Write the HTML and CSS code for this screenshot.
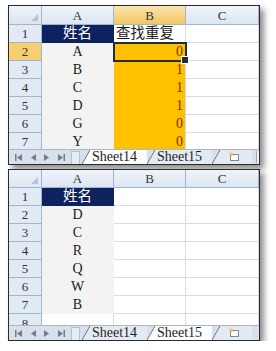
FILE: index.html
```html
<!doctype html>
<html lang="zh-CN">
  <head>
    <meta charset="UTF-8" />
    <meta name="viewport" content="width=device-width, initial-scale=1.0" />
    <title>查找重复</title>
    <link rel="stylesheet" href="styles.css">
  </head>

  <body>
    <div class="page">
      <!-- 上面的表：Sheet14 -->
      <div class="window">
        <div class="sheet">
          <div class="grid">
            <div class="corner"><svg width="7" height="7" viewBox="0 0 7 7"><path d="M7 0V7H0Z" fill="#b9c4d2" /></svg></div>
            <div class="col-head">A</div>
            <div class="col-head col-sel">B</div>
            <div class="col-head">C</div>

            <div class="row-head">1</div>
            <div class="cell title">姓名</div>
            <div class="cell left">查找重复</div>
            <div class="cell"></div>

            <div class="row-head row-sel">2</div>
            <div class="cell name">A</div>
            <div class="cell hit active">0</div>
            <div class="cell"></div>

            <div class="row-head">3</div>
            <div class="cell name">B</div>
            <div class="cell hit">1</div>
            <div class="cell"></div>

            <div class="row-head">4</div>
            <div class="cell name">C</div>
            <div class="cell hit">1</div>
            <div class="cell"></div>

            <div class="row-head">5</div>
            <div class="cell name">D</div>
            <div class="cell hit">1</div>
            <div class="cell"></div>

            <div class="row-head">6</div>
            <div class="cell name">G</div>
            <div class="cell hit">0</div>
            <div class="cell"></div>

            <div class="row-head">7</div>
            <div class="cell name">Y</div>
            <div class="cell hit">0</div>
            <div class="cell"></div>
          </div>
        </div>
        <div class="tabbar">
          <div class="nav">
            <svg width="7" height="7" viewBox="0 0 7 7"><path d="M0 0h1.5v7H0zM7 0v7L2 3.5z" fill="#6f7d91" /></svg>
            <svg width="5" height="7" viewBox="0 0 5 7"><path d="M5 0v7L0 3.5z" fill="#6f7d91" /></svg>
            <svg width="5" height="7" viewBox="0 0 5 7"><path d="M0 0v7l5-3.5z" fill="#6f7d91" /></svg>
            <svg width="7" height="7" viewBox="0 0 7 7"><path d="M5.5 0H7v7H5.5zM0 0v7l5-3.5z" fill="#6f7d91" /></svg>
          </div>
          <div class="split"></div>
          <div class="tab tab-on">Sheet14</div>
          <div class="tab">Sheet15</div>
          <div class="tab tab-add">
            <svg width="12" height="10" viewBox="0 0 12 10"><rect x="2.5" y="2.5" width="8" height="6" fill="#fff" stroke="#7d8a9c" /><path d="M3 0l.7 1.6L5.4 1 4.4 2.4 5.6 3.6 3.9 3.4 3 5 2.4 3.4.6 3.6 1.8 2.4.8 1l1.6.6z" fill="#f2c230" /></svg>
          </div>
          <div class="grip"></div>
        </div>
      </div>

      <!-- 下面的表：Sheet15 -->
      <div class="window">
        <div class="sheet sheet-tall">
          <div class="grid grid-low">
            <div class="corner"><svg width="7" height="7" viewBox="0 0 7 7"><path d="M7 0V7H0Z" fill="#b9c4d2" /></svg></div>
            <div class="col-head">A</div>
            <div class="col-head">B</div>
            <div class="col-head">C</div>

            <div class="row-head">1</div>
            <div class="cell title">姓名</div>
            <div class="cell"></div>
            <div class="cell"></div>

            <div class="row-head">2</div>
            <div class="cell name">D</div>
            <div class="cell"></div>
            <div class="cell"></div>

            <div class="row-head">3</div>
            <div class="cell name">C</div>
            <div class="cell"></div>
            <div class="cell"></div>

            <div class="row-head">4</div>
            <div class="cell name">R</div>
            <div class="cell"></div>
            <div class="cell"></div>

            <div class="row-head">5</div>
            <div class="cell name">Q</div>
            <div class="cell"></div>
            <div class="cell"></div>

            <div class="row-head">6</div>
            <div class="cell name">W</div>
            <div class="cell"></div>
            <div class="cell"></div>

            <div class="row-head">7</div>
            <div class="cell name">B</div>
            <div class="cell"></div>
            <div class="cell"></div>

            <div class="row-head row-cut">8</div>
            <div class="cell"></div>
            <div class="cell"></div>
            <div class="cell"></div>
          </div>
        </div>
        <div class="tabbar">
          <div class="nav">
            <svg width="7" height="7" viewBox="0 0 7 7"><path d="M0 0h1.5v7H0zM7 0v7L2 3.5z" fill="#6f7d91" /></svg>
            <svg width="5" height="7" viewBox="0 0 5 7"><path d="M5 0v7L0 3.5z" fill="#6f7d91" /></svg>
            <svg width="5" height="7" viewBox="0 0 5 7"><path d="M0 0v7l5-3.5z" fill="#6f7d91" /></svg>
            <svg width="7" height="7" viewBox="0 0 7 7"><path d="M5.5 0H7v7H5.5zM0 0v7l5-3.5z" fill="#6f7d91" /></svg>
          </div>
          <div class="split"></div>
          <div class="tab">Sheet14</div>
          <div class="tab tab-on">Sheet15</div>
          <div class="tab tab-add">
            <svg width="12" height="10" viewBox="0 0 12 10"><rect x="2.5" y="2.5" width="8" height="6" fill="#fff" stroke="#7d8a9c" /><path d="M3 0l.7 1.6L5.4 1 4.4 2.4 5.6 3.6 3.9 3.4 3 5 2.4 3.4.6 3.6 1.8 2.4.8 1l1.6.6z" fill="#f2c230" /></svg>
          </div>
        </div>
      </div>
    </div>
  </body>
</html>
```

FILE: styles.css
```css
* {
  box-sizing: border-box;
}

body {
  margin: 0;
  background: #fff;
  font-family: "Liberation Serif", "Noto Sans CJK SC", serif;
  color: #1a1a1a;
}

.page {
  display: flex;
  flex-direction: column;
  gap: 4px;
  padding: 5px 0 0 8px;
}

.window {
  width: 252px;
  border: 1px solid #2b2b2b;
  background: #fff;
  box-shadow: 4px 4px 6px rgba(0, 0, 0, 0.45);
}

.sheet {
  height: 143px;
  overflow: hidden;
}
.sheet-tall {
  height: 155px;
}

.grid {
  display: grid;
  grid-template-columns: 33px 72px 72px 73px;
  grid-template-rows: 19px;
  grid-auto-rows: 18px;
  font-size: 14px;
}
.grid-low {
  grid-template-rows: 18px;
}

.grid > div {
  display: flex;
  align-items: center;
  justify-content: center;
  border-right: 1px solid #d5dce6;
  border-bottom: 1px solid #d5dce6;
  line-height: 1;
}

.corner {
  background: linear-gradient(#eef3f9, #dce5f1);
  border-color: #9eb6ce !important;
}
.grid > .corner {
  align-items: flex-end;
  justify-content: flex-end;
  padding: 0 3px 3px 0;
}

.col-head {
  background: linear-gradient(#f1f5fa, #dbe5f2);
  border-color: #9eb6ce !important;
  color: #333;
  font-size: 13px;
}
.col-sel {
  background: linear-gradient(#fbe4ae, #f3c661);
}

.row-head {
  background: #e2eaf5;
  border-color: #9eb6ce !important;
  color: #333;
  font-size: 13px;
}
.row-sel {
  background: #f6cf70;
}
.grid > .row-cut {
  align-items: flex-start;
  padding-top: 3px;
}

.grid > .left {
  justify-content: flex-start;
  padding-left: 2px;
  font-size: 14.5px;
}

.grid > .title {
  background: #0e235d;
  border-color: #0e235d;
  color: #fff;
  font-size: 14.5px;
}

.grid > .name {
  background: #f3f3f3;
  border-color: #f3f3f3;
}

.grid > .hit {
  justify-content: flex-end;
  padding-right: 2px;
  background: #ffc000;
  border-bottom-color: #ffc000;
  color: #7a3000;
}

.grid > .active {
  position: relative;
  z-index: 1;
  outline: 2px solid #222b36;
  outline-offset: -1px;
}
.active::after {
  content: "";
  position: absolute;
  right: -4px;
  bottom: -4px;
  width: 6px;
  height: 6px;
  background: #222b36;
  border: 1px solid #fff;
}

.tabbar {
  display: flex;
  height: 15px;
  background: #d7e0eb;
  border-top: 1px solid #a8b7ca;
  font-size: 14px;
  line-height: 1;
}

.nav {
  display: flex;
  align-items: center;
  justify-content: space-around;
  width: 62px;
  padding: 0 2px;
}

.split {
  width: 9px;
  margin: 1px 2px 0 0;
  border: 1px solid #b3c0d0;
  border-bottom: none;
  background: #e6ecf3;
}

.tab {
  display: flex;
  align-items: center;
  width: 65px;
  background: #e4eaf2;
  color: #1e1e1e;
}
.tab::before {
  content: "";
  align-self: stretch;
  width: 8px;
  margin-right: 2px;
  flex-shrink: 0;
  background: linear-gradient(
    to bottom right,
    #d7e0eb calc(50% - 0.8px),
    #7f8ea3 calc(50% - 0.3px),
    #7f8ea3 calc(50% + 0.3px),
    #e4eaf2 calc(50% + 0.8px)
  );
}

.tab-on {
  background: #fbfcfd;
}
.tab-on::before {
  background: linear-gradient(
    to bottom right,
    #d7e0eb calc(50% - 0.8px),
    #7f8ea3 calc(50% - 0.3px),
    #7f8ea3 calc(50% + 0.3px),
    #fbfcfd calc(50% + 0.8px)
  );
}

.tab-add {
  width: 40px;
}
.tab-add svg {
  margin-left: 6px;
}

.grip {
  width: 3px;
  margin: 1px 0 1px auto;
  border-left: 1px solid #98a6b8;
  background: #eef2f7;
}
```
